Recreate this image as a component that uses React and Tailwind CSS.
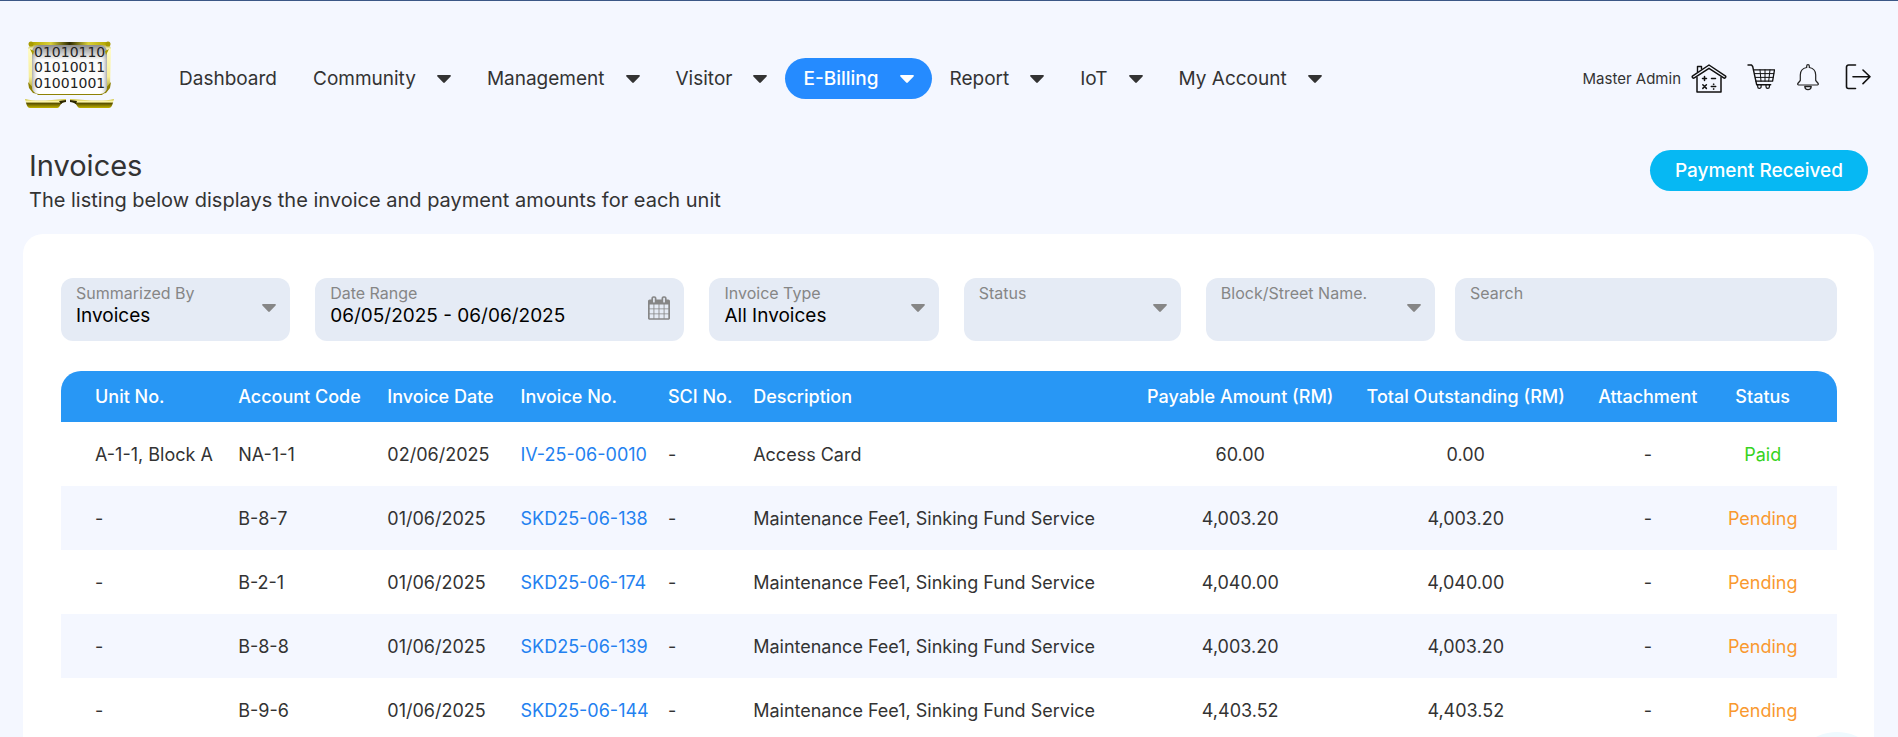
import React, { useState } from "react";

const navItems = [
    { label: "Dashboard", menu: false },
    { label: "Community", menu: true },
    { label: "Management", menu: true },
    { label: "Visitor", menu: true },
    { label: "E-Billing", menu: true, active: true },
    { label: "Report", menu: true },
    { label: "IoT", menu: true },
    { label: "My Account", menu: true }
];

const invoices = [
    { unit: "A-1-1, Block A", account: "NA-1-1", date: "02/06/2025", no: "IV-25-06-0010", description: "Access Card", payable: "60.00", outstanding: "0.00", status: "Paid" },
    { unit: "-", account: "B-8-7", date: "01/06/2025", no: "SKD25-06-138", description: "Maintenance Fee1, Sinking Fund Service", payable: "4,003.20", outstanding: "4,003.20", status: "Pending" },
    { unit: "-", account: "B-2-1", date: "01/06/2025", no: "SKD25-06-174", description: "Maintenance Fee1, Sinking Fund Service", payable: "4,040.00", outstanding: "4,040.00", status: "Pending" },
    { unit: "-", account: "B-8-8", date: "01/06/2025", no: "SKD25-06-139", description: "Maintenance Fee1, Sinking Fund Service", payable: "4,003.20", outstanding: "4,003.20", status: "Pending" },
    { unit: "-", account: "B-9-6", date: "01/06/2025", no: "SKD25-06-144", description: "Maintenance Fee1, Sinking Fund Service", payable: "4,403.52", outstanding: "4,403.52", status: "Pending" }
];

const Caret = () => (
    <svg className="h-2 w-3.5 shrink-0" viewBox="0 0 14 8" fill="currentColor" aria-hidden="true">
        <path d="M1 0h12c.9 0 1.2.9.6 1.5L7.8 7.5c-.5.5-1.1.5-1.6 0L.4 1.5C-.2.9.1 0 1 0z" />
    </svg>
);

const Logo = () => (
    <svg className="h-[68px] w-[90px]" viewBox="0 0 90 68" role="img" aria-label="Home">
        <defs>
            <linearGradient id="gold" x1="0" y1="0" x2="0" y2="1">
                <stop offset="0" stopColor="#8f8400" />
                <stop offset="0.12" stopColor="#fffbc4" />
                <stop offset="0.65" stopColor="#f6ee9a" />
                <stop offset="1" stopColor="#8c7f00" />
            </linearGradient>
            <linearGradient id="bar" x1="0" y1="0" x2="1" y2="0">
                <stop offset="0" stopColor="#b5a800" />
                <stop offset="0.25" stopColor="#d8cf3a" />
                <stop offset="0.5" stopColor="#2e2a00" />
                <stop offset="0.75" stopColor="#d8cf3a" />
                <stop offset="1" stopColor="#b5a800" />
            </linearGradient>
            <linearGradient id="foot" x1="0" y1="0" x2="0" y2="1">
                <stop offset="0" stopColor="#c9bd2a" />
                <stop offset="0.3" stopColor="#fff9b0" />
                <stop offset="0.5" stopColor="#5c5300" />
                <stop offset="1" stopColor="#c2b400" />
            </linearGradient>
            <linearGradient id="screen" x1="0" y1="0" x2="0" y2="1">
                <stop offset="0" stopColor="#8c8c8c" />
                <stop offset="0.3" stopColor="#fafafa" />
                <stop offset="1" stopColor="#ffffff" />
            </linearGradient>
            <linearGradient id="edge" x1="0" y1="0" x2="1" y2="0">
                <stop offset="0" stopColor="#777" stopOpacity="0.6" />
                <stop offset="0.09" stopColor="#fff" stopOpacity="0" />
                <stop offset="0.91" stopColor="#fff" stopOpacity="0" />
                <stop offset="1" stopColor="#777" stopOpacity="0.6" />
            </linearGradient>
        </defs>
        <path d="M7 2h76l3 5-1 39-8 8H13l-9-8L3 7z" fill="url(#gold)" />
        <path d="M3 41l10 12-5-1-4-5zM86 41L76 53l5-1 4-5z" fill="#8c7f00" />
        <rect x="7" y="4" width="75" height="49" rx="7" fill="url(#screen)" />
        <rect x="7" y="4" width="75" height="49" rx="7" fill="url(#edge)" />
        <rect x="7" y="1" width="75" height="3" rx="1" fill="url(#bar)" />
        <circle cx="6" cy="3" r="2.5" fill="#a89b00" />
        <circle cx="83" cy="3" r="2.5" fill="#a89b00" />
        <path d="M5 8l4 2-1 4zM84 8l-4 2 1 4z" fill="#a89b00" />
        <g fontFamily="DejaVu Sans, sans-serif" fontSize="14" fill="#222">
            <text x="9" y="16">01010110</text>
            <text x="9" y="31">01010011</text>
            <text x="9" y="47">01001001</text>
        </g>
        <path d="M0 58c12 3 24 1 41 0v3c-7 0-5 6-9 6H5c-3 0-4-5-5-9z" fill="url(#foot)" />
        <path d="M89 58c-12 3-27 1-44 0v3c8 0 6 6 10 6h29c3 0 4-5 5-9z" fill="url(#foot)" />
        <path d="M34 60l7-1v2c-3 0-4 1-5 2zM45 59l7 1-1 3c-2-1-3-2-6-2z" fill="#2a2500" />
    </svg>
);

const HouseIcon = () => (
    <svg className="h-[30px] w-9" viewBox="0 0 36 30" fill="none" stroke="#111" strokeLinecap="round" strokeLinejoin="round" aria-hidden="true">
        <path d="M6.5 8V2.5h4V5" strokeWidth="1.4" />
        <path d="M1.4 12.2L18 1l16.6 11.2c.6 1-.7 2.4-1.9 1.7L18 4.3 3.3 13.9c-1.3.7-2.5-.7-1.9-1.7z" strokeWidth="1.5" />
        <path d="M6 13.5V28h24V13.5" strokeWidth="1.5" />
        <path d="M11.5 14.5h4M13.5 12.5v4M20.5 14.5h4M11.8 20.8l3.6 3.6M15.4 20.8l-3.6 3.6M20.3 22.6h4.4" strokeWidth="1.5" />
        <circle cx="22.5" cy="20.2" r=".5" fill="#111" strokeWidth=".6" />
        <circle cx="22.5" cy="25" r=".5" fill="#111" strokeWidth=".6" />
    </svg>
);

const CartIcon = () => (
    <svg className="h-[26px] w-7" viewBox="0 0 28 26" fill="none" stroke="#111" strokeLinecap="round" strokeLinejoin="round" aria-hidden="true">
        <path d="M1 1h3.5l1.2 1.5 4 18.3h14" strokeWidth="1.4" />
        <path d="M6.6 5.8h20.9l-1.9 11.4H9" strokeWidth="1.3" />
        <path d="M7.5 9.6h19.3M8.3 13.4h17.8M13 5.8l1 11.4M18 5.8v11.4M23 5.8l-1.3 11.4" strokeWidth="1" />
        <path d="M10.7 21v1.7a1.7 1.7 0 003.4 0V21M19 21v1.7a1.7 1.7 0 003.4 0V21" strokeWidth="1.2" />
    </svg>
);

const BellIcon = () => (
    <svg className="h-[27px] w-[22px]" viewBox="0 0 22 27" fill="none" stroke="#222" strokeLinecap="round" strokeLinejoin="round" aria-hidden="true">
        <path d="M9.7 3.5V2a1.3 1.3 0 012.6 0v1.500c4 .7 6.400 3.500 6.400 7.500v5.500l2.500 3c.3.8 0 1.500-.8 1.500H1.600c-.8 0-1.100-.7-.8-1.500l2.500-3V11c0-4 2.400-6.800 6.400-7.500z" strokeWidth="1.2" />
        <path d="M7.8 22.500c.2 4.200 6.200 4.200 6.400 0z" strokeWidth="1.3" />
    </svg>
);

const LogoutIcon = () => (
    <svg className="h-[26px] w-[26px]" viewBox="0 0 26 26" fill="none" stroke="#111" strokeWidth="1.6" strokeLinecap="round" strokeLinejoin="round" aria-hidden="true">
        <path d="M10.5 1h-7a2 2 0 00-2 2v19.500a2 2 0 002 2h7M8 12.800h17M18 6l7 6.800-7 6.800" />
    </svg>
);

const CalendarIcon = () => (
    <svg className="h-6 w-[22px]" viewBox="0 0 1664 1792" fill="currentColor" aria-hidden="true">
        <path d="M128 1664h288v-288h-288v288zm352 0h320v-288h-320v288zm-352-352h288v-320h-288v320zm352 0h320v-320h-320v320zm-352-384h288v-288h-288v288zm736 736h320v-288h-320v288zm-384-736h320v-288h-320v288zm768 736h288v-288h-288v288zm-384-352h320v-320h-320v320zm-352-864v-288q0-13-9.500-22.500t-22.500-9.500h-64q-13 0-22.500 9.500t-9.500 22.500v288q0 13 9.500 22.500t22.500 9.500h64q13 0 22.500-9.500t9.500-22.500zm736 864h288v-320h-288v320zm-384-384h320v-288h-320v288zm384 0h288v-288h-288v288zm32-480v-288q0-13-9.500-22.500t-22.500-9.500h-64q-13 0-22.500 9.500t-9.500 22.500v288q0 13 9.500 22.500t22.500 9.500h64q13 0 22.500-9.500t9.500-22.500zm384-64v1280q0 52-38 90t-90 38h-1408q-52 0-90-38t-38-90v-1280q0-52 38-90t90-38h128v-96q0-66 47-113t113-47h64q66 0 113 47t47 113v96h384v-96q0-66 47-113t113-47h64q66 0 113 47t47 113v96h128q52 0 90 38t38 90z" />
    </svg>
);

const FilterBox = ({ id, label, icon, children }) => (
    <div className="relative h-[63px] min-w-0 rounded-xl bg-[#e5ebf5] px-[15px] pt-[5px]">
        <label htmlFor={id} className="block truncate text-base leading-5 text-[#868686]">
            {label}
        </label>
        {children}
        {icon && (
            <span className="pointer-events-none absolute top-0 right-3.5 bottom-[3px] flex items-center text-[#868686]">
                {icon}
            </span>
        )}
    </div>
);

const fieldClass = "block h-[26px] w-full appearance-none bg-transparent text-[19px] leading-[26px] text-black outline-none";

const App = () => {
    const [summary, setSummary] = useState("Invoices");
    const [range, setRange] = useState("06/05/2025 - 06/06/2025");
    const [type, setType] = useState("All Invoices");
    const [status, setStatus] = useState("");
    const [block, setBlock] = useState("");
    const [search, setSearch] = useState("");

    return (
        <div className="min-h-screen border-t border-[#3b5786] bg-[#f4f7ff] font-['Inter',sans-serif] text-[#333]">
            <header className="flex items-start pt-9 pr-[27px] pl-[25px]">
                <a href="#" className="mt-1 shrink-0">
                    <Logo />
                </a>

                <nav className="mt-[21px] ml-[46px] flex items-center text-[19px]">
                    {navItems.map((item) => (
                        <a
                            key={item.label}
                            href="#"
                            className={`flex h-[41px] items-center gap-[21px] rounded-full px-[18px] pt-px whitespace-nowrap ${item.active ? "bg-[#258bff] font-medium text-white" : ""}`}
                        >
                            {item.label}
                            {item.menu && <Caret />}
                        </a>
                    ))}
                </nav>

                <div className="mt-[27px] ml-auto flex items-start">
                    <span className="mr-2.5 text-[15px] leading-[30px] whitespace-nowrap">Master Admin</span>
                    <button aria-label="Property"><HouseIcon /></button>
                    <button aria-label="Cart" className="ml-5"><CartIcon /></button>
                    <button aria-label="Notifications" className="ml-[22px]"><BellIcon /></button>
                    <button aria-label="Log out" className="ml-[26px]"><LogoutIcon /></button>
                </div>
            </header>

            <div className="flex items-start justify-between pt-[39px] pr-[30px] pl-[29px]">
                <div>
                    <h1 className="text-[29px] leading-9">Invoices</h1>
                    <p className="text-xl leading-8">The listing below displays the invoice and payment amounts for each unit</p>
                </div>
                <button className="mt-0.5 h-[41px] rounded-full bg-[#06b8f3] px-[25px] pt-px text-[19px] font-medium text-white">
                    Payment Received
                </button>
            </div>

            <main className="mt-[18px] mr-6 ml-[23px] rounded-t-[20px] bg-white pt-11 pr-[37px] pb-10 pl-[38px]">
                <div className="flex gap-5">
                    <div className="grid flex-[1374] grid-cols-[229fr_369fr_229fr_217fr_229fr] gap-[25px]">
                        <FilterBox id="summary" label="Summarized By" icon={<Caret />}>
                            <select id="summary" className={fieldClass} value={summary} onChange={(e) => setSummary(e.target.value)}>
                                <option>Invoices</option>
                            </select>
                        </FilterBox>
                        <FilterBox id="range" label="Date Range" icon={<CalendarIcon />}>
                            <input id="range" type="text" className={fieldClass} value={range} onChange={(e) => setRange(e.target.value)} />
                        </FilterBox>
                        <FilterBox id="type" label="Invoice Type" icon={<Caret />}>
                            <select id="type" className={fieldClass} value={type} onChange={(e) => setType(e.target.value)}>
                                <option>All Invoices</option>
                            </select>
                        </FilterBox>
                        <FilterBox id="status" label="Status" icon={<Caret />}>
                            <select id="status" className={fieldClass} value={status} onChange={(e) => setStatus(e.target.value)}>
                                <option value=""></option>
                            </select>
                        </FilterBox>
                        <FilterBox id="block" label="Block/Street Name." icon={<Caret />}>
                            <select id="block" className={fieldClass} value={block} onChange={(e) => setBlock(e.target.value)}>
                                <option value=""></option>
                            </select>
                        </FilterBox>
                    </div>
                    <div className="flex-[382]">
                        <FilterBox id="search" label="Search">
                            <input id="search" type="text" className={fieldClass} value={search} onChange={(e) => setSearch(e.target.value)} />
                        </FilterBox>
                    </div>
                </div>

                <table className="mt-[30px] w-full table-fixed text-left text-lg whitespace-nowrap">
                    <colgroup>
                        <col className="w-[9.3%]" />
                        <col className="w-[8.4%]" />
                        <col className="w-[7.5%]" />
                        <col className="w-[8.3%]" />
                        <col className="w-[4.8%]" />
                        <col className="w-[21.9%]" />
                        <col className="w-[12.4%]" />
                        <col className="w-[13%]" />
                        <col className="w-[7.5%]" />
                        <col className="w-[6.9%]" />
                    </colgroup>
                    <thead className="text-white">
                        <tr className="h-[51px] *:bg-[#2897f5] *:px-3 *:font-medium">
                            <th className="rounded-tl-[20px] pl-[34px]!">Unit No.</th>
                            <th>Account Code</th>
                            <th>Invoice Date</th>
                            <th>Invoice No.</th>
                            <th>SCI No.</th>
                            <th>Description</th>
                            <th className="text-center">Payable Amount (RM)</th>
                            <th className="text-center">Total Outstanding (RM)</th>
                            <th className="text-center">Attachment</th>
                            <th className="rounded-tr-[20px] pr-[38px]! text-center">Status</th>
                        </tr>
                    </thead>
                    <tbody>
                        {invoices.map((invoice) => (
                            <tr key={invoice.no} className="h-16 *:px-3 *:pt-0.5 even:bg-[#f4f7ff]">
                                <td className="pl-[34px]!">{invoice.unit}</td>
                                <td>{invoice.account}</td>
                                <td>{invoice.date}</td>
                                <td>
                                    <a href="#" className="text-[#2381f0]">{invoice.no}</a>
                                </td>
                                <td>-</td>
                                <td>{invoice.description}</td>
                                <td className="text-center">{invoice.payable}</td>
                                <td className="text-center">{invoice.outstanding}</td>
                                <td className="text-center">-</td>
                                <td className={`pr-[38px]! text-center ${invoice.status === "Paid" ? "text-[#36d321]" : "text-[#f9992f]"}`}>
                                    {invoice.status}
                                </td>
                            </tr>
                        ))}
                    </tbody>
                </table>
            </main>

            {/* floating help bubble, tucked under the bottom edge */}
            <button aria-label="Help" className="fixed right-[13px] -bottom-[91px] size-24 rounded-full bg-[#effaff]" />
        </div>
    );
};

export default App;
